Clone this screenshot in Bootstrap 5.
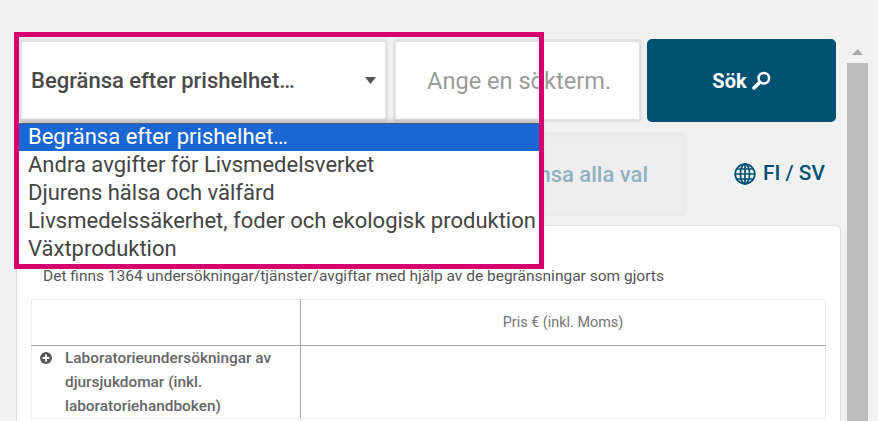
<!DOCTYPE html>
<html lang="sv">
<head>
<meta charset="utf-8">
<title>Prislista</title>
<link href="https://cdn.jsdelivr.net/npm/bootstrap@5.3.0/dist/css/bootstrap.min.css" rel="stylesheet">
<style>
html,body{height:421px;overflow:hidden}
body{background:#f1f1f1;font-family:Roboto,"Liberation Sans",sans-serif;color:#4a4a4a}
.shell{height:421px;overflow:hidden}
.pagecol{width:847px;padding:39px 6px 0 16px;position:relative;flex:none}
.toprow{height:83px;padding-left:3px;gap:5px}
.pick{width:369px;height:83px;border:3px solid #e2e2e2;border-radius:4px;font-size:22px;font-weight:500;color:#4a4a4a;padding:0 0 0 9px;background-color:#fff;background-image:url("data:image/svg+xml,%3Csvg xmlns='http://www.w3.org/2000/svg' width='11' height='7'%3E%3Cpath d='M0 0h11L5.5 7z' fill='%23555'/%3E%3C/svg%3E");background-position:right 9px center;background-size:11px 7px}
.term{width:249px;height:83px;border:3px solid #e2e2e2;border-radius:4px;font-size:23.6px;padding:0 0 0 31px;color:#4a4a4a}
.term::placeholder{color:#9b9b9b;opacity:1}
.seek{width:189px;height:83px;background:#005172;border:0;border-radius:5px;color:#fff;font-size:20px;font-weight:700;gap:5px}
.seek:hover{background:#005172;color:#fff}
.midrow{height:84px;margin-top:10px;padding-left:378px}
.wipe{width:293px;height:84px;background:#eeeeee;border:5px solid #ebebeb;border-radius:5px;color:#8fb1c1;font-size:22px;font-weight:500;text-align:right;padding:0 34px 0 0}
.wipe:hover,.wipe:disabled{background:#eeeeee;border-color:#ebebeb;color:#8fb1c1;opacity:1}
.tongue{color:#005172;font-size:20.8px;font-weight:500;gap:7px;margin-left:47px;text-decoration:none}
.tongue:hover{color:#005172}
.sheet{width:825px;margin-top:9px;border:1px solid #dfdfdf;border-radius:6px;background:#fff;padding:41px 14px 0;height:300px;box-shadow:none}
.tally{font-size:15.5px;line-height:18px;color:#555;margin:0 0 14px 12px}
.prices{width:795px;table-layout:fixed;border-collapse:collapse;font-size:14.4px;color:#757575;margin:0}
.prices td,.prices th{border:1px solid #ececec;padding:0;font-weight:400}
.prices thead th{height:46px;text-align:center;vertical-align:middle;border-bottom:1px solid #a6a6a6;font-weight:400;color:#757575}
.prices .cutline{border-right:1px solid #a6a6a6}
.prices .rowhead{height:73px;font-size:15.4px;font-weight:500;line-height:24px;color:#666;vertical-align:top;padding:0 8px 0 33px;position:relative}
.plus{position:absolute;left:8px;top:6px}
.picklist{position:absolute;left:19px;top:123px;width:521px;height:142px;background:#fff;box-shadow:0 -1px 6px rgba(0,0,0,.3);z-index:2;font-size:22px;line-height:28px;color:#444;padding:0;margin:0;list-style:none}
.picklist li{height:28px;padding-left:9px;white-space:nowrap}
.picklist li.now{background:#1a66d3;color:#fff;box-shadow:inset 0 1px #4b5f7a}
.frame{position:absolute;left:14px;top:32px;width:530px;height:237px;border:5px solid #d4006f;z-index:3;pointer-events:none}
.rail{width:21px;height:421px;margin-top:41px;flex:none;background:#f0f0f0;position:relative}
.railtrack{height:380px;background:#f1f1f1}
.railup{height:22px}
.railthumb{height:358px;background:#bdbdbd}
</style>
</head>
<body>
<div class="shell d-flex">
  <div class="pagecol">
    <div class="toprow d-flex">
      <select class="form-select pick" aria-label="Prishelhet"><option>Begränsa efter prishelhet…</option></select>
      <input class="form-control term" type="text" placeholder="Ange en sökterm.">
      <button class="btn seek d-flex align-items-center justify-content-center" type="button">Sök
        <svg width="19" height="19" viewBox="0 0 18 18" fill="none" stroke="#fff"><circle cx="11.2" cy="6.8" r="5" stroke-width="2.4"/><path d="M7.4 10.6 2 16" stroke-width="3.4" stroke-linecap="round"/></svg>
      </button>
    </div>
    <div class="midrow d-flex align-items-center">
      <button class="btn wipe" type="button">Rensa alla val</button>
      <a class="tongue d-flex align-items-center" href="#">
        <svg width="22" height="22" viewBox="0 0 22 22" fill="none" stroke="#005172" stroke-width="1.7"><circle cx="11" cy="11" r="9.8"/><ellipse cx="11" cy="11" rx="4.6" ry="9.8"/><path d="M11 1v20M1.2 11h19.6M2.6 6h16.8M2.6 16h16.8"/></svg>
        FI / SV
      </a>
    </div>
    <div class="sheet">
      <p class="tally">Det finns 1364 undersökningar/tjänster/avgiftar med hjälp av de begränsningar som gjorts</p>
      <table class="prices">
        <colgroup><col style="width:269px"><col></colgroup>
        <thead><tr><th class="cutline"></th><th>Pris € (inkl. Moms)</th></tr></thead>
        <tbody><tr>
          <td class="rowhead cutline">
            <svg class="plus" width="12" height="12" viewBox="0 0 12 12"><circle cx="6" cy="6" r="6" fill="#5a5a5a"/><path d="M6 2.6v6.8M2.6 6h6.8" stroke="#fff" stroke-width="2"/></svg>
            Laboratorieundersökningar av djursjukdomar (inkl. laboratoriehandboken)
          </td>
          <td></td>
        </tr></tbody>
      </table>
    </div>
    <ul class="picklist">
      <li class="now">Begränsa efter prishelhet…</li>
      <li>Andra avgifter för Livsmedelsverket</li>
      <li>Djurens hälsa och välfärd</li>
      <li>Livsmedelssäkerhet, foder och ekologisk produktion</li>
      <li>Växtproduktion</li>
    </ul>
    <div class="frame"></div>
  </div>
  <div class="rail">
    <div class="railtrack">
      <div class="railup d-flex justify-content-center align-items-center">
        <svg width="11" height="6" viewBox="0 0 11 6"><path d="M0 6 5.5 0 11 6z" fill="#a9a9a9"/></svg>
      </div>
      <div class="railthumb"></div>
    </div>
  </div>
</div>
<script src="https://cdn.jsdelivr.net/npm/bootstrap@5.3.0/dist/js/bootstrap.bundle.min.js"></script>
</body>
</html>
